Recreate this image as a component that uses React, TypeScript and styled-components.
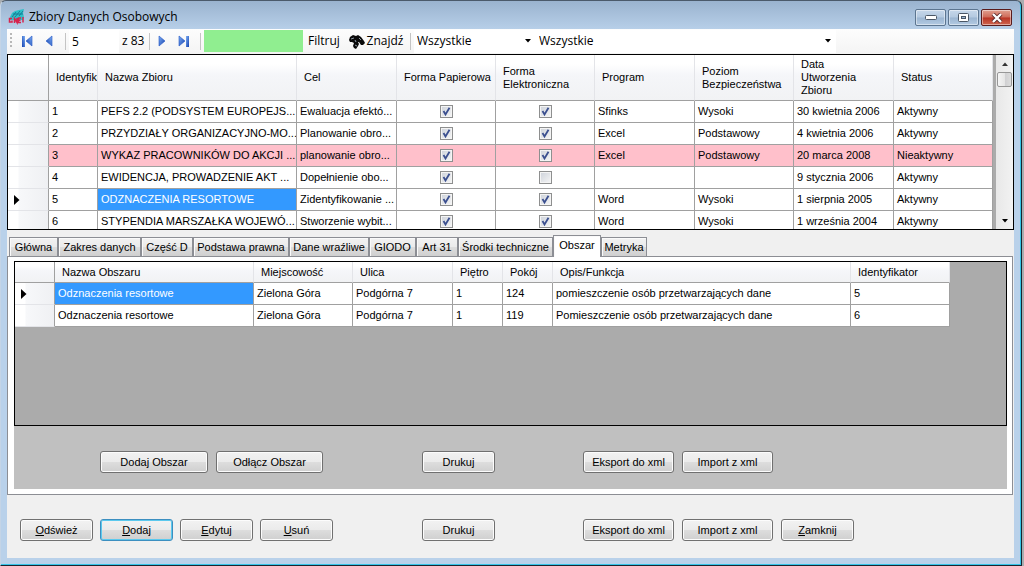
import React from "react";
import styled, { createGlobalStyle, css } from "styled-components";

const Global = createGlobalStyle`
  * { box-sizing: border-box; }
  html, body { margin: 0; background: #a9adb1; }
  body, button, input, select, table { font-family: "Liberation Sans", Arial, sans-serif; font-size: 11px; line-height: 13px; color: #000; }
`;

const uiFont = css`font-family: "Open Sans", "Segoe UI", sans-serif; font-size: 12px; line-height: 16px;`;
const line = "#a0a0a0";

const Frame = styled.div`
  display: flex; flex-direction: column; min-height: 100vh; margin-right: 2px;
  padding: 0 7px 7px 6px; background: linear-gradient(#9ab3cf, #b9d1ea 30px);
  border: 1px solid #1c2530; border-top-color: #4b5a6b; border-left-color: #c4d4e6; border-radius: 6px 6px 0 0;
  box-shadow: inset -1px -1px 0 #35c4e8;
`;
const TitleBar = styled.header`
  display: flex; align-items: center; height: 28px; padding: 4px 2px 0 1px; gap: 4px;
`;
const Title = styled.h1`${uiFont} flex: 1; margin: 0; font-weight: 400;`;
const WindowButtons = styled.div`display: flex; gap: 2px; align-self: flex-start; margin-top: 4px;`;
const WindowButton = styled.button<{ $close?: boolean }>`
  display: grid; place-items: center; width: 31px; height: 17px; padding: 0; border-radius: 2px;
  border: 1px solid ${p => (p.$close ? "#5a1c1c" : "#5c7590")};
  background: ${p => p.$close ? "linear-gradient(#e0a090, #cf6a58 48%, #b83424 52%, #cf6650)" : "linear-gradient(#c6d7ea, #b4c9e0 48%, #9bb5d1 52%, #b3cae2)"};
  box-shadow: inset 0 0 0 1px rgba(255,255,255,.45);
`;
const Client = styled.main`
  flex: 1; display: flex; flex-direction: column; min-width: 0; background: #f0f0f0;
`;

const Toolbar = styled.div`
  ${uiFont} display: flex; align-items: center; height: 25px; padding-bottom: 1px; overflow: hidden;
  background: linear-gradient(#fdfdfd, #f4f4f4);
`;
const Grip = styled.div`
  width: 2px; height: 16px; margin: 0 6px 0 3px;
  background: repeating-linear-gradient(#b8b8b8 0 2px, transparent 2px 4px);
`;
const ToolButton = styled.button<{ $w: number }>`
  ${uiFont} display: flex; align-items: center; justify-content: center; gap: 2px; flex: none;
  width: ${p => p.$w}px; height: 23px; padding: 0; border: 0; background: none; white-space: nowrap;
`;
const Separator = styled.div`width: 1px; height: 17px; margin: 0 3px; background: #c4c4c4; flex: none;`;
const Position = styled.input`
  ${uiFont} width: 50px; height: 23px; padding: 0 3px; border: 0; background: #fff;
`;
const Count = styled.span`width: 27px; padding-left: 3px; white-space: nowrap;`;
const FilterInput = styled.input`width: 99px; height: 22px; border: 0; padding: 0 3px; background: #90ee90;`;
const Combo = styled.label<{ $w: number }>`
  display: grid; align-items: center; flex: none; width: ${p => p.$w}px; height: 23px; background: #fff;
  > * { grid-area: 1 / 1; }
  > svg { justify-self: end; margin-right: 5px; pointer-events: none; }
`;
const ComboSelect = styled.select`
  ${uiFont} appearance: none; width: 100%; height: 23px; padding: 0 3px; border: 0; background: none;
`;

const GridFrame = styled.section<{ $h: number }>`
  display: flex; height: ${p => p.$h}px; border: 1px solid #000; background: #ababab; overflow: hidden;
`;
const GridView = styled.div`flex: 1; min-width: 0; overflow: hidden;`;
const Table = styled.table`table-layout: fixed; border-collapse: separate; border-spacing: 0;`;
const HeadCell = styled.th<{ $h: number }>`
  height: ${p => p.$h}px; padding: 0 0 0 7px; text-align: left; font-weight: 400; overflow: hidden; white-space: pre;
  border-right: 1px solid #e3e4e8; border-bottom: 1px solid ${line};
  background: linear-gradient(#fff 20%, #f5f6f9 44%, #f1f2f4);
  &:first-child { border-right-color: ${line}; }
`;
const RowHead = styled.th`
  padding: 0 0 0 6px; text-align: left; border-right: 1px solid ${line}; border-bottom: 1px solid #e3e4e8;
  background: linear-gradient(90deg, #fff 10px, #f7f8fa 11px, #eff0f3);
  > svg { display: block; }
`;
const Row = styled.tr<{ $alert?: boolean }>`background: ${p => (p.$alert ? "#ffc0cb" : "#fff")};`;
const Cell = styled.td<{ $selected?: boolean }>`
  height: 22px; padding: 0 0 0 3px; white-space: nowrap; overflow: hidden;
  border-right: 1px solid ${line}; border-bottom: 1px solid ${line};
  ${p => p.$selected && "background: #3399ff; color: #fff;"}
`;
const Check = styled.span`
  display: grid; grid-template-columns: 13px; width: 15px; margin: 0 auto;
  > * { grid-area: 1 / 1; pointer-events: none; }
`;
const CheckInput = styled.input`
  appearance: none; width: 13px; height: 13px; margin: 0; border: 1px solid #8e8f8f;
  background: linear-gradient(135deg, #cdd2da, #f6f6f6); box-shadow: inset 0 0 0 1px #f4f4f4;
`;

const ScrollTrack = styled.div`
  display: flex; flex-direction: column; width: 17px; padding: 0 1px; background: linear-gradient(90deg, #e8e8e8, #f2f2f2);
`;
const ScrollButton = styled.button`
  display: grid; place-items: center; height: 17px; padding: 0; border: 0; background: none;
`;
const ScrollThumb = styled.div`
  height: 15px; border: 1px solid #979797; border-radius: 2px;
  background: linear-gradient(90deg, #f5f5f5, #e6e6e6 50%, #cfcfd1 52%, #dcdcdc);
`;
const ScrollGap = styled.div`flex: 1;`;

const Tabs = styled.div`display: flex; align-items: flex-end; height: 21px; margin: 5px 0 0 2px;`;
const Tab = styled.button<{ $w: number; $active?: boolean }>`
  flex: none; width: ${p => p.$w}px; height: 19px; padding: 0; white-space: nowrap;
  border: 1px solid #8c8e94; border-bottom: 0; box-shadow: inset 1px 1px 0 #fafafa;
  background: linear-gradient(#f2f2f2, #ebebeb 48%, #dddddd 52%, #cfcfcf);
  ${p => p.$active && "height: 22px; margin-bottom: -1px; padding-bottom: 3px; background: #fff; position: relative;"}
`;
const TabPage = styled.section`
  margin-right: 1px; padding: 4px 5px 5px 6px; background: #fff; border: 1px solid #8c8e94;
`;
const Actions = styled.div<{ $page?: boolean }>`
  display: flex; height: 63px;
  padding: ${p => (p.$page ? "25px 0 0 86px" : "24px 0 0 13px")};
  ${p => p.$page && "background: #c0c0c0;"}
`;
const ButtonGroup = styled.div<{ $w: number; $tight?: boolean }>`
  display: flex; flex: none; gap: ${p => (p.$tight ? 7 : 8)}px; width: ${p => p.$w}px;
`;
const PushButton = styled.button<{ $w: number; $default?: boolean }>`
  flex: none; width: ${p => p.$w}px; height: 22px; padding: 0; border-radius: 3px;
  border: 1px solid ${p => (p.$default ? "#3c8fc0" : "#707070")};
  box-shadow: inset 0 0 0 1px ${p => (p.$default ? "#5cc9ee" : "#fcfcfc")};
  background: linear-gradient(#f2f2f2, #ebebeb 48%, #dddddd 52%, #cfcfcf);
`;

const AppIcon = () => (
  <svg width="17" height="16" viewBox="0 0 17 16" aria-hidden="true">
    <path d="M2 8 4 4 7 2 11 1 16 0 15 4 16 8 15 11H2Z" fill="#2cc0c8" />
    <path d="M4 8 8 3M7 8 12 2M11 7 15 2M5 5h10" stroke="#12708c" strokeWidth=".8" />
    <path d="M4 9.500H1.500v3.500H4v-1.500M6.500 14V9.500L9 13.500V9M13 9h-2.500v4.500H13M10.500 11.300h2M15 8v5.500" stroke="#d6244e" strokeWidth="1.500" fill="none" />
  </svg>
);
const Arrow = ({ back, bar }: { back?: boolean; bar?: boolean }) => (
  <svg width="12" height="14" viewBox="0 0 12 14" aria-hidden="true">
    <defs><linearGradient id="nav" x2="1" y2="1"><stop stopColor="#7fb0f5" /><stop offset="1" stopColor="#123fae" /></linearGradient></defs>
    <g transform={back ? "matrix(-1 0 0 1 12 0)" : undefined}>
      <path d={bar ? "M1 2 7 7 1 12Z" : "M3 2 9 7 3 12Z"} fill="url(#nav)" stroke="#2456c4" strokeWidth=".6" />
      {bar && <path d="M8 2h3v11H8Z" fill="url(#nav)" />}
    </g>
  </svg>
);
const Binoculars = () => (
  <svg width="16" height="15" viewBox="0 0 16 15" aria-hidden="true">
    <path d="M0 6 1 3 4 1 7 2 9 1 12 3 15 7 16 9 14 11 12 11 10 8 9 8 10 10 9 12 7 15 5 14 4 12 5 9 3 8 1 8Z" fill="#0a0a0a" />
    <path d="M2 5 5 4M6 11l2 1M10 4l2 2M6 6l1 2" stroke="#8f9ba8" strokeWidth="1" />
  </svg>
);
const Down = () => <svg width="6" height="4" viewBox="0 0 6 4" aria-hidden="true"><path d="M0 0h6L3 3.5Z" /></svg>;
const Up = () => <svg width="6" height="4" viewBox="0 0 6 4" aria-hidden="true"><path d="M0 4h6L3 .5Z" fill="#333" /></svg>;
const Current = () => <svg width="6" height="10" viewBox="0 0 6 10" aria-hidden="true"><path d="M0 0 5.500 5 0 10Z" /></svg>;

const CheckBox = ({ on, label }: { on: boolean; label: string }) => (
  <Check>
    <CheckInput type="checkbox" defaultChecked={on} aria-label={label} />
    {on && <svg width="13" height="13" viewBox="0 0 13 13"><path d="M3.500 6 5.500 9.500 9.500 2.800" fill="none" stroke="#3b4f8f" strokeWidth="1.800" /></svg>}
  </Check>
);

const setCols = [41, 49, 199, 100, 99, 99, 100, 99, 100, 99];
const setHeads = ["", "Identyfika", "Nazwa Zbioru", "Cel", "Forma Papierowa", "Forma\nElektroniczna", "Program", "Poziom\nBezpieczeństwa", "Data\nUtworzenia\nZbioru", "Status"];
const sets: [string, string, string, boolean, boolean, string, string, string, string][] = [
  ["1", "PEFS 2.2 (PODSYSTEM EUROPEJS...", "Ewaluacja efektó...", true, true, "Sfinks", "Wysoki", "30 kwietnia 2006", "Aktywny"],
  ["2", "PRZYDZIAŁY ORGANIZACYJNO-MO...", "Planowanie obro...", true, true, "Excel", "Podstawowy", "4 kwietnia 2006", "Aktywny"],
  ["3", "WYKAZ PRACOWNIKÓW DO AKCJI ...", "planowanie obro...", true, true, "Excel", "Podstawowy", "20 marca 2008", "Nieaktywny"],
  ["4", "EWIDENCJA, PROWADZENIE AKT ...", "Dopełnienie obo...", true, false, "", "", "9 stycznia 2006", "Aktywny"],
  ["5", "ODZNACZENIA RESORTOWE", "Zidentyfikowanie ...", true, true, "Word", "Wysoki", "1 sierpnia 2005", "Aktywny"],
  ["6", "STYPENDIA MARSZAŁKA WOJEWÓ...", "Stworzenie wybit...", true, true, "Word", "Wysoki", "1 września 2004", "Aktywny"],
];
const areaCols = [40, 199, 99, 100, 50, 50, 298, 99];
const areaHeads = ["", "Nazwa Obszaru", "Miejscowość", "Ulica", "Piętro", "Pokój", "Opis/Funkcja", "Identyfikator"];
const areas = [
  ["Odznaczenia resortowe", "Zielona Góra", "Podgórna 7", "1", "124", "pomieszczenie osób przetwarzających dane", "5"],
  ["Odznaczenia resortowe", "Zielona Góra", "Podgórna 7", "1", "119", "Pomieszczenie osób przetwarzających dane", "6"],
];
const tabs: [string, number][] = [
  ["Główna", 49], ["Zakres danych", 83], ["Część D", 52], ["Podstawa prawna", 96], ["Dane wraźliwe", 80],
  ["GIODO", 47], ["Art 31", 42], ["Środki techniczne", 95], ["Obszar", 48], ["Metryka", 46],
];

const sum = (w: number[]) => w.reduce((a, b) => a + b, 0);
const Columns = ({ widths }: { widths: number[] }) => <colgroup>{widths.map((w, i) => <col key={i} style={{ width: w }} />)}</colgroup>;
const Heads = ({ names, height }: { names: string[]; height: number }) => (
  <thead><tr>{names.map((n, i) => <HeadCell key={i} $h={height} scope="col">{n}</HeadCell>)}</tr></thead>
);

export default function App() {
  return (
    <>
      <Global />
      <Frame>
        <TitleBar>
          <AppIcon />
          <Title>Zbiory Danych Osobowych</Title>
          <WindowButtons>
            <WindowButton aria-label="Minimalizuj"><svg width="12" height="6"><rect x=".5" y=".5" width="11" height="4" rx="1" fill="#fff" stroke="#4a5665" /></svg></WindowButton>
            <WindowButton aria-label="Maksymalizuj"><svg width="11" height="9"><rect x=".5" y=".5" width="10" height="8" rx="1" fill="#fff" stroke="#4a5665" /><rect x="3.500" y="3.500" width="4" height="2" fill="#9bb5d1" stroke="#4a5665" /></svg></WindowButton>
            <WindowButton $close aria-label="Zamknij okno"><svg width="12" height="10" viewBox="0 0 12 10"><path d="M2 1 10 9M10 1 2 9" stroke="#5b2a2a" strokeWidth="4" /><path d="M2 1 10 9M10 1 2 9" stroke="#fff" strokeWidth="2.400" /></svg></WindowButton>
          </WindowButtons>
        </TitleBar>
        <Client>
          <Toolbar role="toolbar">
            <Grip />
            <ToolButton $w={18} aria-label="Pierwszy"><Arrow back bar /></ToolButton>
            <ToolButton $w={26} aria-label="Poprzedni"><Arrow back /></ToolButton>
            <Separator />
            <Position aria-label="Pozycja" defaultValue="5" />
            <Count>z 83</Count>
            <Separator />
            <ToolButton $w={18} aria-label="Następny"><Arrow /></ToolButton>
            <ToolButton $w={26} aria-label="Ostatni"><Arrow bar /></ToolButton>
            <Separator />
            <FilterInput aria-label="Filtr" />
            <ToolButton $w={42}>Filtruj</ToolButton>
            <ToolButton $w={62}><Binoculars />Znajdź</ToolButton>
            <Separator />
            <Combo $w={122}><ComboSelect aria-label="Zakres"><option>Wszystkie</option></ComboSelect><Down /></Combo>
            <Combo $w={300}><ComboSelect aria-label="Kategoria"><option>Wszystkie</option></ComboSelect><Down /></Combo>
          </Toolbar>
          <GridFrame $h={176}>
            <GridView>
              <Table style={{ width: sum(setCols) }}>
                <Columns widths={setCols} />
                <Heads names={setHeads} height={46} />
                <tbody>
                  {sets.map((r, i) => (
                    <Row key={i} $alert={i === 2}>
                      <RowHead scope="row">{i === 4 && <Current />}</RowHead>
                      {r.map((v, j) => (
                        <Cell key={j} $selected={i === 4 && j === 1}>
                          {typeof v === "boolean" ? <CheckBox on={v} label={setHeads[j + 1] + " " + r[0]} /> : v}
                        </Cell>
                      ))}
                    </Row>
                  ))}
                </tbody>
              </Table>
            </GridView>
            <ScrollTrack>
              <ScrollButton aria-label="W górę"><Up /></ScrollButton>
              <ScrollThumb />
              <ScrollGap />
              <ScrollButton aria-label="W dół"><Down /></ScrollButton>
            </ScrollTrack>
          </GridFrame>
          <Tabs role="tablist">
            {tabs.map(([name, w]) => (
              <Tab key={name} role="tab" $w={w} $active={name === "Obszar"} aria-selected={name === "Obszar"}>{name}</Tab>
            ))}
          </Tabs>
          <TabPage role="tabpanel">
            <GridFrame $h={165}>
              <GridView>
                <Table style={{ width: sum(areaCols) }}>
                  <Columns widths={areaCols} />
                  <Heads names={areaHeads} height={21} />
                  <tbody>
                    {areas.map((r, i) => (
                      <Row key={i}>
                        <RowHead scope="row">{i === 0 && <Current />}</RowHead>
                        {r.map((v, j) => <Cell key={j} $selected={i === 0 && j === 0}>{v}</Cell>)}
                      </Row>
                    ))}
                  </tbody>
                </Table>
              </GridView>
            </GridFrame>
            <Actions $page>
              <ButtonGroup $w={322}><PushButton $w={108}>Dodaj Obszar</PushButton><PushButton $w={107}>Odłącz Obszar</PushButton></ButtonGroup>
              <ButtonGroup $w={161}><PushButton $w={73}>Drukuj</PushButton></ButtonGroup>
              <ButtonGroup $w={190}><PushButton $w={91}>Eksport do xml</PushButton><PushButton $w={91}>Import z xml</PushButton></ButtonGroup>
            </Actions>
          </TabPage>
          <Actions>
            <ButtonGroup $w={402} $tight>
              <PushButton $w={73}><u>O</u>dśwież</PushButton><PushButton $w={73} $default><u>D</u>odaj</PushButton>
              <PushButton $w={73}><u>E</u>dytuj</PushButton><PushButton $w={73}><u>U</u>suń</PushButton>
            </ButtonGroup>
            <ButtonGroup $w={161}><PushButton $w={73}>Drukuj</PushButton></ButtonGroup>
            <ButtonGroup $w={271}>
              <PushButton $w={91}>Eksport do xml</PushButton><PushButton $w={91}>Import z xml</PushButton><PushButton $w={73}><u>Z</u>amknij</PushButton>
            </ButtonGroup>
          </Actions>
        </Client>
      </Frame>
    </>
  );
}
